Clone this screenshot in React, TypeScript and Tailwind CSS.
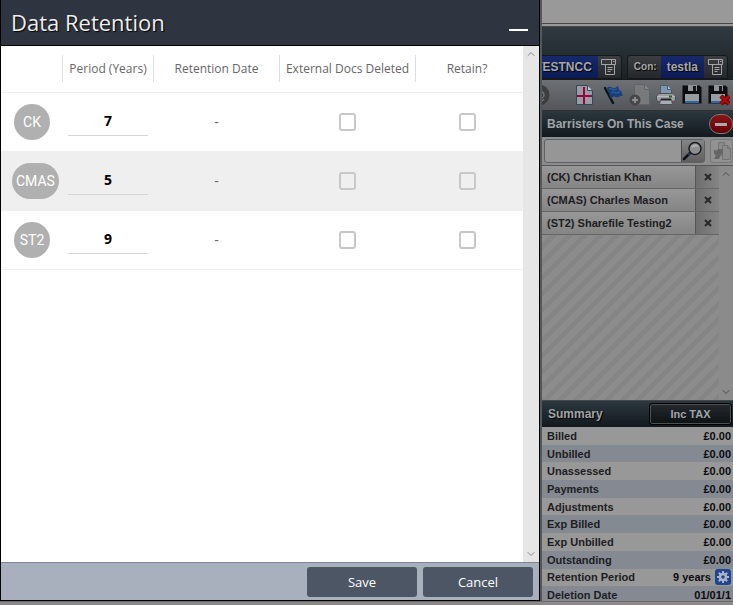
import React, { useState } from 'react';
import clsx from 'clsx';
import { ChevronDown, ChevronUp } from 'lucide-react';

type Member = { code: string; name: string; years: string };

const members: Member[] = [
  { code: 'CK', name: 'Christian Khan', years: '7' },
  { code: 'CMAS', name: 'Charles Mason', years: '5' },
  { code: 'ST2', name: 'Sharefile Testing2', years: '9' },
];

const summary = [
  { label: 'Billed', value: '£0.00' },
  { label: 'Unbilled', value: '£0.00' },
  { label: 'Unassessed', value: '£0.00' },
  { label: 'Payments', value: '£0.00' },
  { label: 'Adjustments', value: '£0.00' },
  { label: 'Exp Billed', value: '£0.00' },
  { label: 'Exp Unbilled', value: '£0.00' },
  { label: 'Outstanding', value: '£0.00' },
  { label: 'Retention Period', value: '9 years', settings: true },
  { label: 'Deletion Date', value: '01/01/1' },
];

const FormIcon = () => (
  <svg width="16" height="16" viewBox="0 0 16 16" fill="none" stroke="#a3a5a6">
    <path d="M4.500 5.500h-4v-5h14v5M10.500.5v5M.5 5.500h14M4.500 5.500v10h9v-10" />
    <path d="M12 2.500h1.500M6.500 8.500h5M6.500 10.500h5M6.500 12.500h3" />
  </svg>
);

const AtIcon = () => (
  <svg width="20" height="24" viewBox="0 0 20 24">
    <circle cx="8" cy="12" r="10.500" fill="#3d3e40" />
    <path
      d="M8 16c-3 0-4-2-4-4s2-4 4-4 5 1 5 4-3 4-3 1V9M10 13c0 2-3 2-3 0s3-2 3 0M5 17c3 2 7 1 8-1"
      fill="none"
      stroke="#77797c"
      strokeWidth="1.3"
    />
  </svg>
);

const GridPageIcon = () => (
  <svg width="18" height="20" viewBox="0 0 18 20">
    <path d="M.5.5h11l5 5v14H.5z" fill="#999da3" stroke="#34465b" />
    <path d="M11.500.5v5h5" fill="#c3c6ca" stroke="#34465b" />
    <path d="M1 11h15M8 2v17" stroke="#98003f" strokeWidth="2" />
  </svg>
);

const FlagIcon = () => (
  <svg width="22" height="20" viewBox="0 0 22 20">
    <path d="M2 3 10 18" stroke="#111418" strokeWidth="2.500" strokeLinecap="round" />
    <path d="M4 3c3-3 5 1 8 0l3-2 1 4 2 1 2 5c-3-1-4 2-7 1-2-1-3-1-5 2z" fill="#173e78" />
    <path d="M6 4c3-1 4 2 8 0M8 8c3-2 5 1 9-1" fill="none" stroke="#285c9f" strokeWidth="1.5" />
  </svg>
);

const AddPageIcon = () => (
  <svg width="22" height="22" viewBox="0 0 22 22">
    <path d="M5.500 .5h10l5 5v15h-15z" fill="#77797c" stroke="#606266" />
    <path d="M15.500.5v5h5" fill="#85878a" stroke="#606266" />
    <circle cx="6" cy="16" r="5.500" fill="#444649" />
    <path d="M6 13v6M3 16h6" stroke="#8b8d90" strokeWidth="2" />
  </svg>
);

const PrinterIcon = () => (
  <svg width="20" height="20" viewBox="0 0 20 20">
    <path d="M4.500 9V.5h7l4 4V9" fill="#8097b0" stroke="#4b5b6e" />
    <path d="M11.500.5v4h4" fill="#b0bcc8" stroke="#4b5b6e" />
    <path
      d="M3 8.500h14l2.500 2.500v4l-2 1.500h-15L.5 15v-4z"
      fill="#9b9ea2"
      stroke="#4c4f54"
    />
    <path d="M1 11.500h18" stroke="#b7babd" />
    <path d="M13 11.500h3" stroke="#206b28" strokeWidth="2" />
    <path d="M4.500 14.500h11l1 5h-13z" fill="#a9adb2" stroke="#4c4f54" />
    <path d="M5 14.500h10" stroke="#202329" strokeWidth="2" />
  </svg>
);

const DiskIcon = ({ cross = false }: { cross?: boolean }) => (
  <svg width={cross ? 22 : 20} height="22" viewBox={cross ? '0 0 22 22' : '0 0 20 22'}>
    <path d="M.5 1.500h17l2 2v16H.5z" fill="#0b0d10" />
    <path d="M6 1h9v6H6z" fill="#8f9296" />
    <path d="M11 2h3v5h-3z" fill="#15171b" />
    <path d="M3 10h14v8H3z" fill="#999c9f" />
    <path d="M3 17h14v2H3z" fill="#2c68a6" />
    {cross && <path d="m13 12 8 8m0-8-8 8" stroke="#5b0003" strokeWidth="4.500" />}
    {cross && <path d="m13 12 8 8m0-8-8 8" stroke="#ae0909" strokeWidth="2.500" />}
  </svg>
);

const SearchIcon = () => (
  <svg width="22" height="20" viewBox="0 0 22 20">
    <path d="m2 18 7-7" stroke="#101214" strokeWidth="2.500" strokeLinecap="round" />
    <path d="m6 14 2-2" stroke="#1d2c82" strokeWidth="2" />
    <circle cx="13" cy="7.500" r="6" fill="#8d8f91" stroke="#1b1d1f" strokeWidth="1.500" />
    <path d="M9.500 7c0-4 6-5 7-1-2-1-4 0-7 1" fill="#b1b3b4" />
  </svg>
);

const CopyIcon = () => (
  <svg width="18" height="18" viewBox="0 0 18 18" fill="#8b8b8b" stroke="#727272">
    <path d="M5.500.5h6v13h-6z" />
    <path d="M9.500 3.500h5l3 3v11h-8zM14.500 3.500v3h3" />
    <path d="M1 7l2 2 2-2h5v6l-2-1-2 5H1l2-4-2-1z" fill="#666" stroke="none" />
  </svg>
);

const GearIcon = () => (
  <svg width="12" height="12" viewBox="0 0 12 12" fill="none" stroke="#a9b4c7">
    <path
      d="M6 0v12M0 6h12M1.800 1.800l8.400 8.400M10.200 1.800l-8.400 8.400"
      strokeWidth="2"
    />
    <circle cx="6" cy="6" r="3" fill="#1f4590" strokeWidth="2.500" />
  </svg>
);

const checkbox =
  'mx-auto block h-[18px] w-[17px] appearance-none rounded-[3px] border-2 border-[#c8c8c8] checked:bg-[#4c5664]';

const Dialog = () => {
  const [years, setYears] = useState(members.map((m) => m.years));
  return (
    <section className="flex flex-1 min-w-0 flex-col border-x border-b border-black bg-white font-['Open_Sans',sans-serif]">
      <header className="flex h-[46px] items-center justify-between border-b border-black bg-[#2e3541] pr-[11px] pl-[10px]">
        <h1 className="text-[22px] text-[#eee] [text-shadow:1px_1px_1px_#000]">
          Data Retention
        </h1>
        <button aria-label="Minimise" className="flex h-6 w-[19px] items-end pb-1">
          <span className="h-[2px] w-full bg-white" />
        </button>
      </header>
      <div className="flex flex-1">
        <div className="flex-1">
          <table className="w-full table-fixed border-collapse text-center text-xs text-[#666]">
            <colgroup>
              <col className="w-[61px]" />
              <col className="w-[92px]" />
              <col className="w-[125px]" />
              <col className="w-[137px]" />
              <col />
            </colgroup>
            <thead>
              <tr className="h-[46px] border-b border-[#eee]">
                <td />
                {['Period (Years)', 'Retention Date', 'External Docs Deleted', 'Retain?'].map(
                  (title, i) => (
                    <th key={title} className="p-0 font-normal whitespace-nowrap last:pr-[5px]">
                      <div
                        className={clsx(
                          'h-[27px] border-[#dcdce2] leading-[27px]',
                          i === 0 && 'border-x',
                          i === 2 && 'border-x'
                        )}
                      >
                        {title}
                      </div>
                    </th>
                  )
                )}
              </tr>
            </thead>
            <tbody>
              {members.map((m, i) => (
                <tr key={m.code} className="h-[59px] border-b border-[#eee] even:bg-[#efefef]">
                  <td className="p-0">
                    <div className="ml-[11px] flex w-fit min-w-10 justify-center">
                      <span className="flex h-9 min-w-9 items-center justify-center rounded-full bg-[#b0b0b0] px-1 font-[Roboto,sans-serif] text-sm text-white">
                        {m.code}
                      </span>
                    </div>
                  </td>
                  <td className="p-0">
                    <input
                      type="text"
                      aria-label={`Period for ${m.code}`}
                      value={years[i]}
                      onChange={(e) =>
                        setYears(years.map((y, n) => (n === i ? e.target.value : y)))
                      }
                      className="mx-auto block h-[29px] w-20 border-b border-[#d5d5d5] bg-transparent pb-[2px] text-center text-sm font-bold text-black outline-none"
                    />
                  </td>
                  <td className="p-0 text-sm">-</td>
                  <td className="p-0">
                    <input
                      type="checkbox"
                      aria-label={`External docs deleted for ${m.code}`}
                      className={checkbox}
                    />
                  </td>
                  <td className="p-0 pr-[5px]">
                    <input type="checkbox" aria-label={`Retain ${m.code}`} className={checkbox} />
                  </td>
                </tr>
              ))}
            </tbody>
          </table>
        </div>
        <div className="flex w-4 flex-col items-center justify-between bg-[#e6e6e6] py-[2px] text-[#888]">
          <ChevronUp size={12} strokeWidth={2} />
          <ChevronDown size={12} strokeWidth={2} />
        </div>
      </div>
      <footer className="flex h-[38px] items-center justify-end gap-[6px] border-t border-[#7b8794] bg-[#a9b0bd] pr-[6px] text-[13px] text-white [text-shadow:1px_1px_1px_#222]">
        <button className="h-[30px] w-[110px] rounded-[3px] bg-[#4c5664] pt-[2px]">Save</button>
        <button className="h-[30px] w-[110px] rounded-[3px] bg-[#4c5664] pt-[2px]">Cancel</button>
      </footer>
    </section>
  );
};

const Tag = ({ prefix, text }: { prefix?: string; text: string }) => (
  <div className="flex h-6 shrink-0 items-stretch rounded-t-[3px] border border-[#14181b] bg-linear-to-b from-[#3b3d3f] to-[#25282b] font-bold text-[#a5a7a9] [text-shadow:1px_1px_1px_#000]">
    {prefix && <span className="flex items-center pr-1 pl-[6px] text-[10px]">{prefix}</span>}
    <span className="flex items-center bg-linear-to-b from-[#17296d] to-[#0c1b55] px-[6px] text-xs">
      {text}
    </span>
    <button aria-label={`Details ${text}`} className="flex w-[23px] items-center justify-center">
      <FormIcon />
    </button>
  </div>
);

const tools = [
  { label: 'Calendar', icon: <GridPageIcon />, width: 'w-[28px]' },
  { label: 'Flag', icon: <FlagIcon />, width: 'w-[29px]' },
  { label: 'Add document', icon: <AddPageIcon />, width: 'w-[24px]' },
  { label: 'Print', icon: <PrinterIcon />, width: 'w-[27px]' },
  { label: 'Save', icon: <DiskIcon />, width: 'w-[26px]' },
  { label: 'Save and close', icon: <DiskIcon cross />, width: 'w-[27px]' },
];

const Sidebar = () => (
  <aside className="flex w-[193px] shrink-0 flex-col overflow-hidden border-l-2 border-[#55585b] bg-[#8b8b8b] font-['Liberation_Sans',Arial,sans-serif] text-xs text-[#1d1d1f]">
    <div className="h-[27px] border-b-4 border-double border-[#484848] bg-[#999]" />
    <div className="flex h-[53px] items-end justify-end gap-[5px] overflow-hidden border-b border-[#15191c] bg-linear-to-b from-[#303a40] to-[#1a2226] pr-[5px]">
      <Tag text="TESTNCC" />
      <Tag prefix="Con:" text="testla" />
    </div>
    <div className="flex h-[30px] items-center justify-end overflow-hidden bg-linear-to-b from-[#6d7176] to-[#53565a] pr-px">
      <button aria-label="Email" className="mr-5 shrink-0">
        <AtIcon />
      </button>
      {tools.map((t) => (
        <button
          key={t.label}
          aria-label={t.label}
          className={clsx('flex shrink-0 justify-center', t.width)}
        >
          {t.icon}
        </button>
      ))}
    </div>
    <div className="flex h-[27px] items-center justify-between border-t border-[#303336] bg-linear-to-b from-[#2c373e] to-[#121a1f] pl-[5px]">
      <h2 className="text-xs font-bold text-[#a0a4a7]">Barristers On This Case</h2>
      <button
        aria-label="Collapse"
        className="flex h-5 w-6 items-center justify-center rounded-full border border-[#787878] bg-linear-to-b from-[#8b1418] to-[#650006]"
      >
        <span className="h-[3px] w-3 bg-[#aaa]" />
      </button>
    </div>
    <div className="flex h-[29px] items-center gap-[5px] border-b border-[#555] bg-[#8d8d8d] pl-[2px]">
      <div className="flex h-6 min-w-0 flex-1 rounded-[3px] border border-[#5e6267] bg-[#969696]">
        <input
          type="text"
          aria-label="Find barrister"
          className="min-w-0 flex-1 px-1 outline-none"
        />
        <button
          aria-label="Search"
          className="flex w-[23px] shrink-0 items-center justify-center border-l border-[#4c4c4c] bg-linear-to-b from-[#858585] to-[#5f5f5f]"
        >
          <SearchIcon />
        </button>
      </div>
      <button
        aria-label="Copy"
        className="flex h-6 w-[23px] shrink-0 items-center justify-center rounded-[3px] border border-[#777] bg-[#929292]"
      >
        <CopyIcon />
      </button>
    </div>
    <div className="flex flex-1">
      <div className="flex-1 bg-[repeating-linear-gradient(135deg,#858585_0,#858585_5px,#8c8c8c_5px,#8c8c8c_11px)]">
        <ul>
          {members.map((m) => (
            <li
              key={m.code}
              className="flex h-[23px] items-center border-b border-[#666] bg-linear-to-b from-[#979797] to-[#858585]"
            >
              <span className="flex-1 pl-[5px] text-[11px] font-bold whitespace-nowrap">
                ({m.code}) {m.name}
              </span>
              <button
                aria-label={`Remove ${m.name}`}
                className="flex h-full w-6 items-center justify-center border-l border-[#555] bg-linear-to-r from-[#6e6e6e] to-[#858585]"
              >
                <svg width="8" height="8" viewBox="0 0 8 8">
                  <path d="m1 1 6 6m0-6-6 6" stroke="#26282a" strokeWidth="2" />
                </svg>
              </button>
            </li>
          ))}
        </ul>
      </div>
      <div className="flex w-[14px] flex-col items-center justify-between bg-[#8b8b8b] py-[2px] text-[#505050]">
        <ChevronUp size={12} />
        <ChevronDown size={12} />
      </div>
    </div>
    <div className="flex h-[27px] items-center justify-between border-t border-[#44494d] bg-linear-to-b from-[#2c373e] to-[#121a1f] pr-[2px] pl-[6px] font-bold text-[#a0a4a7] [text-shadow:1px_1px_1px_#000]">
      <h2>Summary</h2>
      <button className="h-5 w-[81px] rounded-[2px] border border-[#4b4f52] bg-linear-to-b from-[#22282c] to-[#0e1315] text-[11px] outline outline-black">
        Inc TAX
      </button>
    </div>
    <div className="h-[174px] overflow-hidden">
      <table className="h-[177px] w-full border-collapse text-[11px] leading-4 font-bold">
        <tbody>
          {summary.map((s) => (
            <tr key={s.label} className="bg-[#989898] even:bg-[#858a92]">
              <th className="p-0 pl-[5px] text-left whitespace-nowrap">{s.label}</th>
              <td className="p-0 pr-[2px] text-right whitespace-nowrap text-[#0c0c0e]">
                <div className="flex items-center justify-end gap-1">
                  {s.value}
                  {s.settings && (
                    <button
                      aria-label="Retention settings"
                      className="flex size-4 items-center justify-center rounded-[3px] bg-[#1f4590]"
                    >
                      <GearIcon />
                    </button>
                  )}
                </div>
              </td>
            </tr>
          ))}
        </tbody>
      </table>
    </div>
  </aside>
);

export default function App() {
  return (
    <main className="flex min-h-screen flex-col bg-[#8b898a]">
      <div className="flex flex-1">
        <Dialog />
        <Sidebar />
      </div>
      <div className="h-1 border-t border-[#6b6b6b]" />
    </main>
  );
}
